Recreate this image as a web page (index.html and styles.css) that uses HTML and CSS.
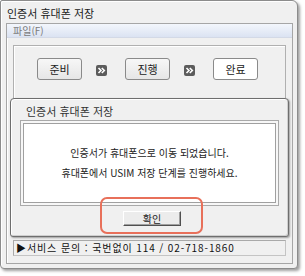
FILE: index.html
```html
<!DOCTYPE html>
<html lang="ko">
<head>
<meta charset="utf-8">
<link rel="stylesheet" href="styles.css">
</head>
<body>
<div class="window">
  <div class="titlebar">인증서 휴대폰 저장</div>
  <div class="frame">
    <div class="menubar">파일(F)</div>
    <div class="content">
      <div class="steps">
        <div class="step">준비</div>
        <svg class="arrow" width="11" height="11" viewBox="0 0 11 11"><rect width="11" height="11" rx="2" fill="#5c5c5c"/><path d="M2.5 3 L5 5.5 L2.5 8 M5.8 3 L8.3 5.5 L5.8 8" fill="none" stroke="#fff" stroke-width="1.6"/></svg>
        <div class="step">진행</div>
        <svg class="arrow" width="11" height="11" viewBox="0 0 11 11"><rect width="11" height="11" rx="2" fill="#5c5c5c"/><path d="M2.5 3 L5 5.5 L2.5 8 M5.8 3 L8.3 5.5 L5.8 8" fill="none" stroke="#fff" stroke-width="1.6"/></svg>
        <div class="step step-done">완료</div>
      </div>
      <div class="statusbar">▶서비스 문의 : 국번없이 114 / 02-718-1860</div>
    </div>
  </div>
  <div class="dialog">
    <div class="dlg-title">인증서 휴대폰 저장</div>
    <div class="msg-wrap">
      <div class="msg">인증서가 휴대폰으로 이동 되었습니다.<br>휴대폰에서 USIM 저장 단계를 진행하세요.</div>
    </div>
    <div class="dlg-actions">
      <button class="ok">확인</button>
    </div>
  </div>
  <div class="highlight"></div>
</div>
</body>
</html>
```
FILE: styles.css
```css
* { box-sizing: border-box; }
html, body { margin: 0; padding: 0; background: #fff; }
body {
  width: 305px;
  height: 276px;
  font-family: "Noto Sans CJK KR", "DejaVu Sans", sans-serif;
  color: #222;
}
.window {
  position: relative;
  width: 298px;
  height: 269px;
  background: #f0f0f0;
  border: 1px solid #8c8c8c;
  border-radius: 2px 6px 4px 4px;
  box-shadow: 2px 2px 3px rgba(0,0,0,0.38), inset 1px 1px 0 #fff;
}
.titlebar {
  height: 22px;
  padding-left: 6px;
  font-size: 11px;
  line-height: 24px;
  color: #222;
}
.frame {
  margin: 0 4px 0 5px;
  height: 241px;
  border: 1px solid #a6a6a6;
  box-shadow: inset 1px 1px 0 #fff;
  background: #f0f0f0;
}
.menubar {
  height: 14px;
  padding-left: 6px;
  font-size: 10px;
  line-height: 14px;
  color: #7a7a7a;
  background: linear-gradient(#f3f6fc, #dbe3f2);
  border-bottom: 1px solid #d3d9e6;
}
.content {
  padding: 7px 6px 0 6px;
}
.steps {
  height: 187px;
  border: 1px solid #b0b0b0;
  box-shadow: inset 1px 1px 0 #fff;
  display: flex;
  align-items: flex-start;
  padding: 12px 0 0 23px;
}
.step {
  width: 45px;
  height: 22px;
  border: 1px solid #8a8a8a;
  border-radius: 3px;
  background: linear-gradient(#f7f7f7, #e6e6e6);
  font-size: 11px;
  line-height: 20px;
  text-align: center;
  color: #222;
}
.step-done { background: #fff; }
.arrow { margin: 7px 18px 0 14px; flex: none; }
.statusbar {
  margin-top: 8px;
  width: 273px;
  height: 16px;
  border: 1px solid #c4c4c4;
  border-top-color: #a9a9a9;
  border-left-color: #a9a9a9;
  padding-left: 2px;
  font-size: 10px;
  line-height: 14px;
  letter-spacing: 0.9px;
  color: #111;
}
.dialog {
  position: absolute;
  left: 9px;
  top: 97px;
  width: 279px;
  height: 139px;
  background: #f0f0f0;
  border: 1px solid #6e6e6e;
  border-radius: 4px 4px 3px 3px;
  box-shadow: 1px 1px 2px rgba(0,0,0,0.35), inset 1px 1px 0 #fff, inset -1px -1px 0 #cfcfcf;
  padding: 0 9px 0 9px;
}
.dlg-title {
  height: 21px;
  padding-left: 6px;
  font-size: 11px;
  line-height: 24px;
  color: #333;
}
.msg-wrap {
  border: 1px solid #a9a9a9;
  padding: 2px;
  background: #f7f7f7;
}
.msg {
  height: 80px;
  background: #fff;
  border: 1px solid #a0a0a0;
  padding-top: 19px;
  font-size: 10px;
  line-height: 20px;
  text-align: center;
  color: #222;
}
.dlg-actions {
  display: flex;
  justify-content: center;
  padding: 5px 0 0 5px;
}
.ok {
  width: 58px;
  height: 15px;
  padding: 0;
  background: #ececec;
  border: 1px solid;
  border-color: #fff #505050 #505050 #fff;
  box-shadow: inset -1px -1px 0 #a0a0a0;
  font-family: "Noto Sans CJK KR", "DejaVu Sans", sans-serif;
  font-size: 10px;
  line-height: 12px;
  color: #222;
}
.highlight {
  position: absolute;
  left: 99px;
  top: 196px;
  width: 103px;
  height: 37px;
  border: 2.5px solid #e8705a;
  border-radius: 7px;
}
```
